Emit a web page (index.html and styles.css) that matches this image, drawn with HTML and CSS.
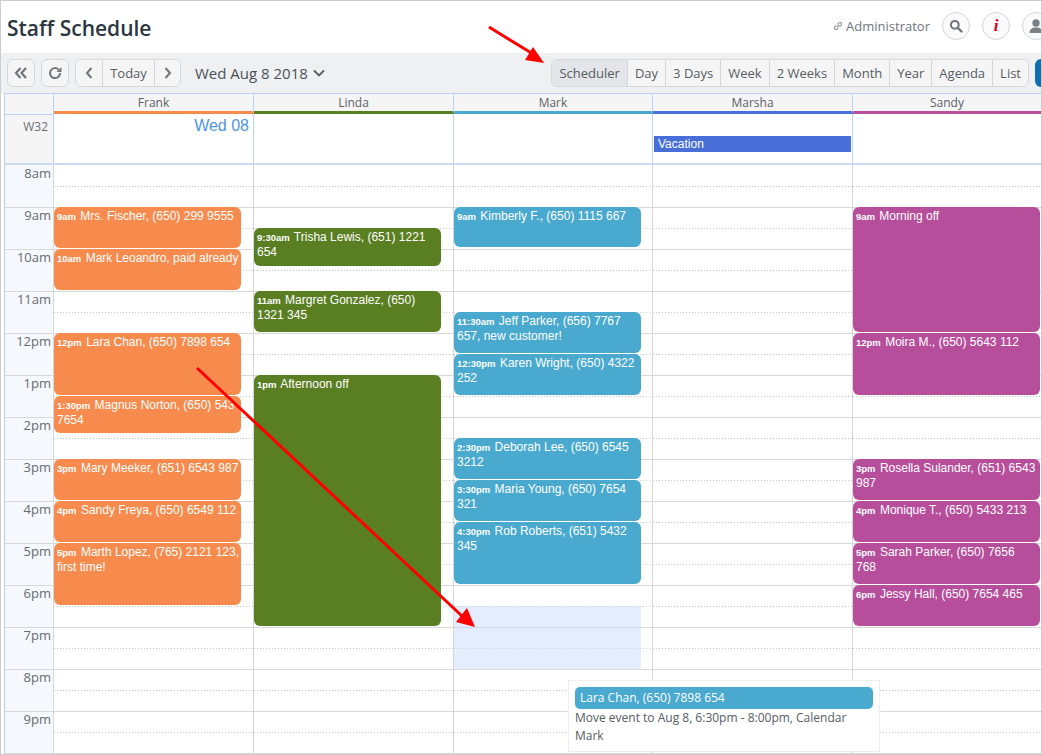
FILE: index.html
```html
<!DOCTYPE html>
<html lang="en">
<head>
<meta charset="utf-8">
<title>Staff Schedule</title>
<link rel="stylesheet" href="styles.css">
</head>
<body>
<div class="app">
  <header class="topbar">
    <h1 class="title">Staff Schedule</h1>
    <div class="user">
      <svg class="link-icon" viewBox="0 0 12 12" width="12" height="12"><path d="M5 7.200 7.200 5M4.400 5.400 2.600 7.200a1.600 1.600 0 0 0 2.200 2.200l1.800-1.800M5.400 4.400l1.800-1.800a1.600 1.600 0 0 1 2.200 2.200L7.600 6.600" fill="none" stroke="#8a9097" stroke-width="1.100"/></svg>
      <span class="user-name">Administrator</span>
      <span class="circle"><svg viewBox="0 0 14 14" width="14" height="14"><circle cx="5.800" cy="5.800" r="3.900" fill="none" stroke="#6f757b" stroke-width="2"/><path d="M8.800 8.800 12.500 12.500" stroke="#6f757b" stroke-width="2.400" stroke-linecap="round"/></svg></span>
      <span class="circle info">i</span>
      <span class="circle"><svg viewBox="0 0 16 16" width="16" height="16"><circle cx="8" cy="5" r="3.700" fill="#7b8086"/><path d="M1.500 15c0-4 3-5 4.600-5.600h3.800C11.500 10 14.500 11 14.500 15z" fill="#7b8086"/></svg></span>
    </div>
  </header>
  <nav class="toolbar">
    <button class="btn icon-btn"><svg viewBox="0 0 14 12" width="14" height="12"><path d="M6.500 1 2 6l4.500 5M12 1 7.500 6l4.500 5" fill="none" stroke="#6f757b" stroke-width="2.200"/></svg></button>
    <button class="btn icon-btn"><svg viewBox="0 0 14 14" width="14" height="14"><path d="M12 7a5 5 0 1 1-1.500-3.500" fill="none" stroke="#6f757b" stroke-width="2"/><path d="M13.500 1v5h-5z" fill="#6f757b"/></svg></button>
    <div class="group">
      <button class="seg icon-seg"><svg viewBox="0 0 8 12" width="8" height="12"><path d="M6.500 1 2 6l4.500 5" fill="none" stroke="#6f757b" stroke-width="2"/></svg></button>
      <button class="seg today">Today</button>
      <button class="seg icon-seg"><svg viewBox="0 0 8 12" width="8" height="12"><path d="M1.500 1 6 6l-4.500 5" fill="none" stroke="#6f757b" stroke-width="2"/></svg></button>
    </div>
    <div class="date">Wed Aug 8 2018 <svg viewBox="0 0 12 8" width="12" height="8"><path d="M1 1.500 6 6.500l5-5" fill="none" stroke="#555c63" stroke-width="1.800"/></svg></div>
    <div class="group views">
      <button class="seg active">Scheduler</button>
      <button class="seg">Day</button>
      <button class="seg">3 Days</button>
      <button class="seg">Week</button>
      <button class="seg">2 Weeks</button>
      <button class="seg">Month</button>
      <button class="seg">Year</button>
      <button class="seg">Agenda</button>
      <button class="seg">List</button>
    </div>
    <span class="add"></span>
  </nav>
  <main class="cal">
    <div class="row names">
      <div class="gutter"></div>
      <div class="name s-orange">Frank</div>
      <div class="name s-green">Linda</div>
      <div class="name s-teal">Mark</div>
      <div class="name s-blue">Marsha</div>
      <div class="name s-purple">Sandy</div>
    </div>
    <div class="row allday">
      <div class="gutter week">W32</div>
      <div class="day"><span class="date-label">Wed 08</span></div>
      <div class="day"></div>
      <div class="day"></div>
      <div class="day"><span class="vacation">Vacation</span></div>
      <div class="day"></div>
    </div>
    <div class="row body">
      <div class="hours">
        <div class="hour">8am</div><div class="hour">9am</div><div class="hour">10am</div><div class="hour">11am</div><div class="hour">12pm</div><div class="hour">1pm</div><div class="hour">2pm</div><div class="hour">3pm</div><div class="hour">4pm</div><div class="hour">5pm</div><div class="hour">6pm</div><div class="hour">7pm</div><div class="hour">8pm</div><div class="hour">9pm</div>
      </div>
      <div class="col">
        <div class="ev orange" style="top:42px;height:41px"><b>9am</b> Mrs. Fischer, (650) 299 9555</div>
        <div class="ev orange" style="top:84px;height:41px"><b>10am</b> Mark Leoandro, paid already</div>
        <div class="ev orange" style="top:168px;height:62px"><b>12pm</b> Lara Chan, (650) 7898 654</div>
        <div class="ev orange" style="top:231px;height:37px"><b>1:30pm</b> Magnus Norton, (650) 543 7654</div>
        <div class="ev orange" style="top:294px;height:41px"><b>3pm</b> Mary Meeker, (651) 6543 987</div>
        <div class="ev orange" style="top:336px;height:41px"><b>4pm</b> Sandy Freya, (650) 6549 112</div>
        <div class="ev orange" style="top:378px;height:62px"><b>5pm</b> Marth Lopez, (765) 2121 123, first time!</div>
      </div>
      <div class="col">
        <div class="ev green" style="top:63px;height:38px"><b>9:30am</b> Trisha Lewis, (651) 1221 654</div>
        <div class="ev green" style="top:126px;height:41px"><b>11am</b> Margret Gonzalez, (650) 1321 345</div>
        <div class="ev green" style="top:210px;height:251px"><b>1pm</b> Afternoon off</div>
      </div>
      <div class="col">
        <div class="ev teal" style="top:42px;height:40px"><b>9am</b> Kimberly F., (650) 1115 667</div>
        <div class="ev teal" style="top:147px;height:41px"><b>11:30am</b> Jeff Parker, (656) 7767 657, new customer!</div>
        <div class="ev teal" style="top:189px;height:41px"><b>12:30pm</b> Karen Wright, (650) 4322 252</div>
        <div class="ev teal" style="top:273px;height:41px"><b>2:30pm</b> Deborah Lee, (650) 6545 3212</div>
        <div class="ev teal" style="top:315px;height:41px"><b>3:30pm</b> Maria Young, (650) 7654 321</div>
        <div class="ev teal" style="top:357px;height:62px"><b>4:30pm</b> Rob Roberts, (651) 5432 345</div>
        <div class="drop"></div>
      </div>
      <div class="col"></div>
      <div class="col">
        <div class="ev purple" style="top:42px;height:125px"><b>9am</b> Morning off</div>
        <div class="ev purple" style="top:168px;height:62px"><b>12pm</b> Moira M., (650) 5643 112</div>
        <div class="ev purple" style="top:294px;height:41px"><b>3pm</b> Rosella Sulander, (651) 6543 987</div>
        <div class="ev purple" style="top:336px;height:41px"><b>4pm</b> Monique T., (650) 5433 213</div>
        <div class="ev purple" style="top:378px;height:41px"><b>5pm</b> Sarah Parker, (650) 7656<br>768</div>
        <div class="ev purple" style="top:420px;height:41px"><b>6pm</b> Jessy Hall, (650) 7654 465</div>
      </div>
      <div class="tip">
        <div class="tip-head">Lara Chan, (650) 7898 654</div>
        <div class="tip-text">Move event to Aug 8, 6:30pm - 8:00pm, Calendar Mark</div>
      </div>
    </div>
  </main>
  <svg class="arrows" viewBox="0 0 1042 755" width="1042" height="755">
    <path d="M489 27 533 54" stroke="#f00" stroke-width="3" fill="none"/>
    <path d="M544 63 525 60 533 47z" fill="#f00"/>
    <path d="M197 368 462 616" stroke="#f00" stroke-width="3" fill="none"/>
    <path d="M475 627 456 622 467 608z" fill="#f00"/>
  </svg>
</div>
</body>
</html>
```
FILE: styles.css
```css
* { box-sizing: border-box; }
html, body { margin: 0; padding: 0; overflow: hidden; }
body { width: 1042px; height: 755px; background: #fff; font-family: "Open Sans", sans-serif; color: #4b5259; }
.app { position: relative; width: 1042px; height: 755px; overflow: hidden; border: 1px solid #ccc; }
.topbar { height: 52px; display: flex; align-items: center; padding: 2px 0 0 6px; }
.title { margin: 0; font-size: 21px; font-weight: 600; color: #2c3640; }
.user { margin-left: auto; margin-bottom: 4px; display: flex; align-items: center; flex: none; margin-right: -21px; }
.link-icon { margin-right: 2px; }
.user-name { font-size: 13px; color: #70767c; margin-right: 12px; }
.circle { width: 28px; height: 28px; border-radius: 50%; border: 1px solid #d5d6d8; background: #fbfbfb; display: flex; align-items: center; justify-content: center; margin-right: 12px; }
.info { font-family: "Liberation Serif", serif; font-weight: 700; font-style: italic; font-size: 17px; color: #d0021b; }
.toolbar { height: 40px; background: #eff0f2; display: flex; align-items: center; padding: 0 0 0 6px; }
.btn, .seg { font-family: "Open Sans", sans-serif; font-size: 13px; color: #555c63; background: #f5f5f6; height: 28px; padding: 0; display: flex; align-items: center; justify-content: center; }
.btn { width: 28px; border: 1px solid #d6d7d9; border-radius: 6px; margin-right: 6px; }
.group { display: flex; border: 1px solid #d6d7d9; border-radius: 6px; overflow: hidden; flex: none; }
.seg { border: 0; border-left: 1px solid #d6d7d9; height: 26px; padding: 0 7px; }
.seg:first-child { border-left: 0; }
.icon-seg { width: 26px; padding: 0; }
.today { width: 52px; padding: 0; }
.date { font-size: 15px; color: #4b5259; margin-left: 14px; display: flex; align-items: center; gap: 1px; white-space: pre; }
.views { margin-left: auto; }
.active { background: #e4e5e8; }
.add { width: 20px; height: 28px; background: #0b6fb0; border-radius: 6px; margin-left: 6px; margin-right: -14px; flex: none; }
.cal { margin-left: 3px; width: 1038px; font-size: 12px; }
.row { display: grid; grid-template-columns: 50px 200px 200px 199px 200px 189px; }
.names { height: 21px; background: #f5f5f5; border-top: 1px solid #bdd0f5; }
.gutter { border-left: 1px solid #bdd0f5; border-right: 1px solid #bdd0f5; background: #f5f5f5; }
.name { border-right: 1px solid #bdd0f5; text-align: center; line-height: 17px; color: #5b6269; border-bottom: 3px solid; }
.s-orange { border-bottom-color: #f68b4d; }
.s-green { border-bottom-color: #5a7e22; }
.s-teal { border-bottom-color: #4aa9ce; }
.s-blue { border-bottom-color: #486fd8; }
.s-purple { border-bottom-color: #b74e9b; }
.allday { height: 49px; }
.week { border-top: 1px solid #bdd0f5; text-align: right; padding: 3px 5px 0 0; color: #6a7076; }
.day { border-right: 1px solid #bdd0f5; display: flex; flex-direction: column; }
.date-label { font-family: "Liberation Sans", sans-serif; font-size: 16px; color: #4f94de; text-align: right; padding: 3px 4px 0 0; line-height: 18px; }
.vacation { margin: 22px 1px 0; background: #486fd8; color: #fff; font-family: "Liberation Sans", sans-serif; height: 16px; line-height: 17px; padding-left: 4px; }
.body { position: relative; border-top: 2px solid #cdd9ee; height: 600px; background: repeating-linear-gradient(to bottom, #fff 0, #fff 41px, #d8d8d8 41px, #d8d8d8 42px) 0 1px; }
.hours { border-left: 1px solid #bdd0f5; border-right: 1px solid #d8d8d8; background: #f5f8fc; padding-top: 1px; position: relative; z-index: 1; }
.hour { height: 42px; border-bottom: 1px solid #d8d8d8; text-align: right; padding: 0 2px 0 0; line-height: 15px; font-size: 13px; color: #666c72; }
.col { position: relative; border-right: 1px solid #d8d8d8; }
.col::before { content: ""; position: absolute; inset: 0; background: repeating-linear-gradient(to right, #c8c8c8 0, #c8c8c8 1px, transparent 1px, transparent 3px); -webkit-mask-image: repeating-linear-gradient(to bottom, transparent 0, transparent 21px, #000 21px, #000 22px, transparent 22px, transparent 42px); mask-image: repeating-linear-gradient(to bottom, transparent 0, transparent 21px, #000 21px, #000 22px, transparent 22px, transparent 42px); }
.ev { position: absolute; left: 0; width: 187px; border-radius: 6px; color: #fff; font-family: "Liberation Sans", sans-serif; font-size: 12px; line-height: 15px; padding: 2px 1px 1px 3px; overflow: hidden; }
.ev b { font-size: 9.5px; margin-right: 1px; }
.orange { background: #f68b4d; }
.green { background: #5a7e22; }
.teal { background: #4aa9ce; }
.purple { background: #b74e9b; }
.drop { position: absolute; left: 0; top: 441px; width: 187px; height: 63px; background: rgba(199, 220, 251, .5); }
.tip { position: absolute; left: 564px; top: 515px; width: 312px; height: 72px; background: #fff; border: 1px solid #eee; padding: 6px; z-index: 2; font-size: 12px; color: #555c63; }
.tip-head { background: #4aa9ce; color: #fff; border-radius: 5px; height: 22px; line-height: 22px; padding-left: 5px; font-size: 12px; }
.tip-text { line-height: 18px; margin-top: 0; }
.arrows { position: absolute; left: -1px; top: -1px; z-index: 5; pointer-events: none; }
```
